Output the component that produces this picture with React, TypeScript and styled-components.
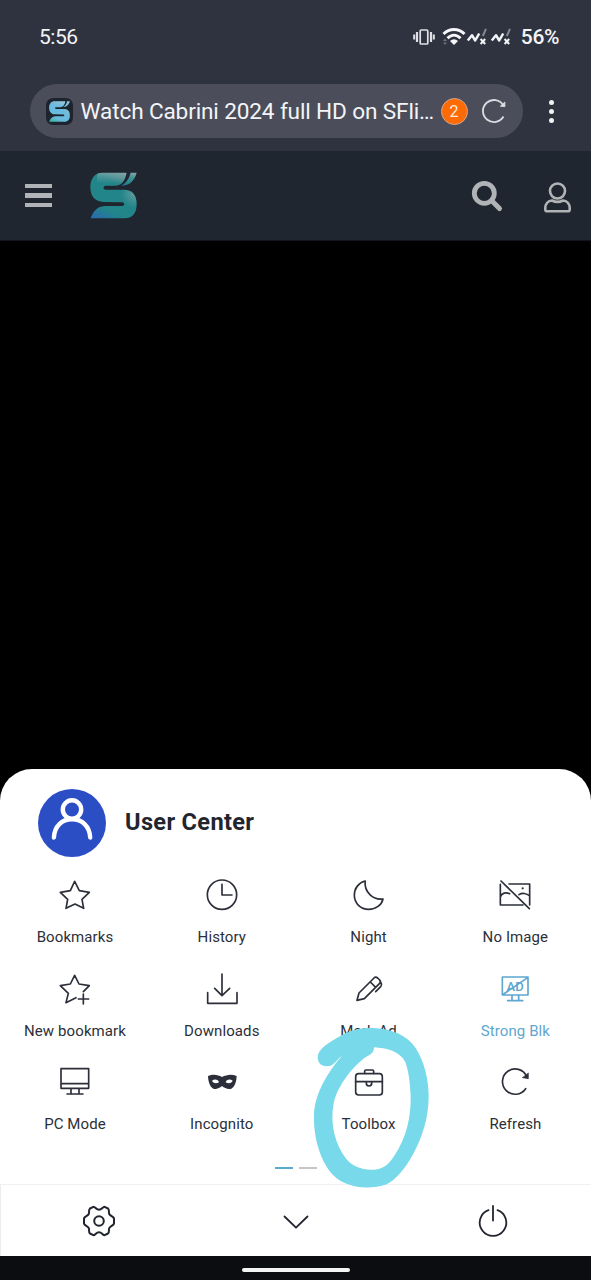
import React from "react";
import styled, { createGlobalStyle } from "styled-components";

const GlobalStyle = createGlobalStyle`
  *, *::before, *::after { box-sizing: border-box; }
  html, body { margin: 0; padding: 0; background: #000; }
  body { font-family: Roboto, "Liberation Sans", sans-serif; overflow: hidden; }
  svg { display: block; flex: none; }
`;

const Screen = styled.div`
  position: relative;
  display: flex;
  flex-direction: column;
  width: 591px;
  height: 1280px;
  background: #000;
  overflow: hidden;
`;

const BrowserTop = styled.div`
  height: 151px;
  background: #2f333f;
`;

const StatusBar = styled.div`
  display: flex;
  align-items: center;
  justify-content: space-between;
  height: 84px;
  padding: 0 32px 10px 39px;
  color: #f3f4f8;
  font-size: 21px;
  line-height: 24px;
`;

const Clock = styled.span`
  letter-spacing: -0.45px;
`;

const StatusIcons = styled.div`
  display: flex;
  align-items: center;
`;

const WifiIcon = styled.svg`
  margin-left: 7px;
`;

const Battery = styled.span`
  margin-left: 7px;
  font-weight: 500;
  letter-spacing: -0.4px;
`;

const AddressRow = styled.div`
  display: flex;
  align-items: center;
  padding-left: 30px;
`;

const AddressPill = styled.div`
  display: flex;
  align-items: center;
  width: 493px;
  height: 54px;
  padding: 0 15px 0 16px;
  border-radius: 27px;
  background: #4b4e5a;
`;

const Favicon = styled.div`
  display: flex;
  align-items: center;
  justify-content: center;
  width: 27px;
  height: 27px;
  border-radius: 7px;
  background: #1e242e;
`;

const PageTitle = styled.span`
  width: 360px;
  margin: 1px 0 0 7.5px;
  color: #f3f4f8;
  font-size: 22.6px;
  line-height: 30px;
  letter-spacing: -0.14px;
  white-space: nowrap;
`;

const Counter = styled.span`
  display: flex;
  align-items: center;
  justify-content: center;
  width: 27px;
  height: 27px;
  border: 1px solid #d3a88d;
  border-radius: 50%;
  background: #fe6a04;
  color: #fbeade;
  font-size: 16px;
`;

const ReloadIcon = styled.svg`
  margin-left: 12.5px;
`;

const MoreButton = styled.div`
  display: flex;
  flex-direction: column;
  gap: 4px;
  margin-left: 26px;
`;

const Dot = styled.i`
  width: 5px;
  height: 5px;
  border-radius: 50%;
  background: #f0f1f5;
`;

const SiteHeader = styled.header`
  display: flex;
  align-items: center;
  height: 90px;
  padding: 0 18px 0 25px;
  border-bottom: 1px solid #11151b;
  background: #20262f;
`;

const MenuButton = styled.div`
  display: flex;
  flex-direction: column;
  gap: 5px;
  width: 27px;
  margin-right: 38px;
`;

const MenuBar = styled.i`
  height: 4.6px;
  background: #b1b4b6;
`;

const HeaderActions = styled.div`
  display: flex;
  align-items: center;
  gap: 39.5px;
  margin-left: auto;
`;

const Video = styled.main`
  height: 528px;
  background: #000;
`;

const Sheet = styled.section`
  display: flex;
  flex-direction: column;
  height: 487px;
  border-radius: 32px 32px 0 0;
  background: #fff;
  color: #292c35;
`;

const Profile = styled.div`
  display: flex;
  align-items: center;
  height: 108px;
  padding-left: 37.5px;
`;

const ProfileName = styled.h1`
  margin: 0 0 3px 19.5px;
  font-size: 23.6px;
  font-weight: 700;
  line-height: 30px;
  letter-spacing: 0.33px;
  color: #22252e;
`;

const Tiles = styled.div`
  display: grid;
  grid-template-columns: repeat(4, 146.8px);
  grid-auto-rows: 93.6px;
  padding-left: 1.6px;
`;

const Tile = styled.div<{ $active?: boolean }>`
  display: flex;
  flex-direction: column;
  align-items: center;
  color: ${(p) => (p.$active ? "#5fa6d0" : "#2c2f39")};
`;

const TileLabel = styled.span`
  margin-top: 14px;
  font-size: 15px;
  line-height: 20px;
  letter-spacing: 0.1px;
  white-space: nowrap;
`;

const Pager = styled.div`
  display: flex;
  justify-content: center;
  gap: 6px;
  margin-top: 9px;
`;

const PagerDash = styled.i<{ $on?: boolean }>`
  width: 18px;
  height: 2px;
  background: ${(p) => (p.$on ? "#58a9ce" : "#c6c6c8")};
`;

const Toolbar = styled.div`
  display: grid;
  grid-template-columns: repeat(3, 1fr);
  align-items: center;
  justify-items: center;
  height: 72px;
  margin-top: auto;
  border-top: 1px solid #f1f1f1;
  border-left: 1px solid #ededf0;
  color: #22252e;
`;

const SystemNav = styled.div`
  display: flex;
  justify-content: center;
  height: 24px;
  padding-top: 12px;
  background: #0b0d11;
`;

const HomeHandle = styled.i`
  width: 108px;
  height: 4px;
  border-radius: 2px;
  background: #f4f4f4;
`;

const Highlight = styled.svg`
  position: absolute;
  left: 300px;
  top: 1020px;
  pointer-events: none;
`;

function SLogo({ id, size, colors }: { id: string; size: number; colors: [string, string, string] }) {
  const body =
    "M378 83H306C283 83 270 101 270 126C270 154 285 170 309 170L366 171Q371 172 371 177T366 182H315C286 183 276 204 271 219H371C396 219 408 203 408 177C408 149 395 134 370 134H315Q309 133 309 128T315 122H346C366 120 374 103 378 83Z";
  const accent = "M408 83H390C386 100 378 112 362 122C388 121 401 107 408 83Z";
  return (
    <svg width={size} height={size} viewBox="269 82 140 138">
      <defs>
        <linearGradient id={id + "g"} x1="0.7" y1="0" x2="0.2" y2="1">
          <stop offset="0" stopColor={colors[0]} />
          <stop offset="0.25" stopColor={colors[1]} />
          <stop offset="0.78" stopColor={colors[1]} />
          <stop offset="1" stopColor={colors[2]} />
        </linearGradient>
        <pattern id={id + "p"} width="6" height="6" patternUnits="userSpaceOnUse">
          <rect width="3" height="3" fill="#a7b7b9" />
          <rect x="3" y="3" width="3" height="3" fill="#a7b7b9" />
        </pattern>
        <radialGradient id={id + "r"} gradientUnits="userSpaceOnUse" cx="403" cy="145" r="42">
          <stop offset="0" stopColor="#fff" />
          <stop offset="1" stopColor="#000" />
        </radialGradient>
        <linearGradient id={id + "t"} gradientUnits="userSpaceOnUse" x1="0" y1="82" x2="0" y2="116">
          <stop offset="0" stopColor="#fff" />
          <stop offset="1" stopColor="#000" />
        </linearGradient>
        <mask id={id + "m"} maskUnits="userSpaceOnUse" x="269" y="82" width="140" height="138">
          <rect x="290" y="82" width="120" height="34" fill={`url(#${id}t)`} />
          <rect x="360" y="125" width="50" height="60" fill={`url(#${id}r)`} />
        </mask>
      </defs>
      <path d={body} fill={`url(#${id}g)`} />
      <path d={accent} fill={`url(#${id}g)`} />
      <path d={body + accent} fill={`url(#${id}p)`} mask={`url(#${id}m)`} />
    </svg>
  );
}

const Signal = () => (
  <svg width="24" height="20" viewBox="0 0 24 20" fill="none" strokeLinejoin="round">
    <path d="M1.8 13.5L6 8.2L9.2 13.5L13.2 6.5" stroke="#f3f4f8" strokeWidth="2.5" />
    <path d="M16.8 9L20 1.8" stroke="#858892" strokeWidth="2" />
    <path d="M14.6 12L19.2 17M19.2 12L14.6 17" stroke="#f3f4f8" strokeWidth="2" />
  </svg>
);

function StatusGlyphs() {
  return (
    <>
      <svg width="22" height="18" viewBox="0 0 22 18" fill="none" stroke="#e0e1e6">
        <rect x="7.2" y="2" width="7.6" height="14" rx="1" strokeWidth="1.7" />
        <path d="M4 4V14M18 4V14" strokeWidth="2.2" />
        <path d="M1.2 6.5V11.5M20.8 6.5V11.5" strokeWidth="2" />
      </svg>
      <WifiIcon width="24" height="20" viewBox="0 0 24 20" fill="none">
        <path d="M1.5 7C7.5 1 16.5 1 22.5 7" stroke="#f7f7fa" strokeWidth="3" />
        <path d="M5.5 11.2C9.5 7 14.5 7 18.5 11.2" stroke="#f7f7fa" strokeWidth="2.8" />
        <path d="M8 14Q12 10.5 16 14L12 18Z" fill="#f7f7fa" />
        <path d="M1 14L3 11.5L5 14ZM1 15.5L3 18L5 15.5Z" fill="#6f727c" />
      </WifiIcon>
      <Signal />
      <Signal />
    </>
  );
}

const ICONS: Record<string, React.ReactNode> = {
  star: <path d="M53 13L67 41L97 46L75 67L80 94L54 81L27 94L32 67L10 46L40 41Z" />,
  clock: (
    <>
      <circle cx="54" cy="53" r="44" />
      <path d="M54 22V54H84" />
    </>
  ),
  moon: <path d="M42.5 12C23 17 10 34 10 54C10 79 29 97 53 97C75 97 92 84 96 66C66 70 39 45 42.5 12Z" />,
  noImage: (
    <>
      <path d="M12 12L97 95M36 21H98V84M78 84H10V22M10 60C14 47 27 45 38 50M66 53C75 47 89 48 98 57" />
      <circle cx="77" cy="34" r="3.4" fill="currentColor" stroke="none" />
    </>
  ),
  starPlus: <path d="M79 62L97 44L66 39L53 13L40 39L10 44L34 67L27 95L57 80M79 69V99M64 84H95" />,
  download: <path d="M54 9V73M32 52L54 74L77 52M11 65V97H99V65" />,
  pencil: (
    <path d="M18 88L24 66L69 21Q74 16 80 21L86 27Q91 32 86 37L40 83L18 88ZM58 33L74 49M86 28L91 38Q93 43 89 47L74 62" />
  ),
  adBlock: (
    <>
      <path d="M16 18H93V72H16ZM20 69L92 20M45 73V88M65 73V88M32 89H77" />
      <text
        x="54.5"
        y="59"
        textAnchor="middle"
        fontFamily="Roboto, sans-serif"
        fontSize="39"
        fontWeight="500"
        fill="currentColor"
        stroke="none"
      >
        AD
      </text>
    </>
  ),
  monitor: <path d="M12 14H95V73H12ZM12 59H95M42 74V89M66 74V89M30 90H78" />,
  mask: (
    <path
      fill="currentColor"
      stroke="none"
      fillRule="evenodd"
      d="M12 36C28 29 42 32 54 39C67 32 82 29 98 36C97 54 93 68 82 74C71 77 62 72 54 66C46 72 37 77 28 74C17 68 13 54 12 36ZM24 50C27 57 35 60 45 55C43 47 33 44 24 50ZM86 50C77 44 67 47 65 55C75 60 83 57 86 50Z"
    />
  ),
  toolbox: (
    <>
      <rect x="14" y="29" width="80" height="64" rx="9" />
      <path d="M41 28V22Q41 18 45 18H64Q68 18 68 22V28M14 53H94M46 53V58Q46 66 54 66T62 58V53" />
    </>
  ),
  refresh: (
    <>
      <path d="M86 74A38 38 0 1 1 89 37" />
      <path d="M94 28V44L77 41Z" fill="currentColor" strokeWidth="2" />
    </>
  ),
};

const tiles: { icon: string; label: string; active?: boolean }[] = [
  { icon: "star", label: "Bookmarks" },
  { icon: "clock", label: "History" },
  { icon: "moon", label: "Night" },
  { icon: "noImage", label: "No Image" },
  { icon: "starPlus", label: "New bookmark" },
  { icon: "download", label: "Downloads" },
  { icon: "pencil", label: "Mark Ad" },
  { icon: "adBlock", label: "Strong Blk", active: true },
  { icon: "monitor", label: "PC Mode" },
  { icon: "mask", label: "Incognito" },
  { icon: "toolbox", label: "Toolbox" },
  { icon: "refresh", label: "Refresh" },
];

export default function App() {
  return (
    <Screen>
      <GlobalStyle />
      <BrowserTop>
        <StatusBar>
          <Clock>5:56</Clock>
          <StatusIcons>
            <StatusGlyphs />
            <Battery>56%</Battery>
          </StatusIcons>
        </StatusBar>
        <AddressRow>
          <AddressPill>
            <Favicon>
              <SLogo id="fav" size={21} colors={["#8fd0ec", "#6abbe0", "#45b3a6"]} />
            </Favicon>
            <PageTitle>Watch Cabrini 2024 full HD on SFli…</PageTitle>
            <Counter>2</Counter>
            <ReloadIcon width="28" height="28" viewBox="0 0 28 28" fill="none" stroke="#dcdde2" strokeWidth="1.8">
              <path d="M23.5 19.5A11 11 0 1 1 23.3 8.2" />
              <path d="M24.9 5V9.7L20.3 9.2Z" fill="#dcdde2" strokeWidth="0.8" />
            </ReloadIcon>
          </AddressPill>
          <MoreButton>
            <Dot />
            <Dot />
            <Dot />
          </MoreButton>
        </AddressRow>
      </BrowserTop>
      <SiteHeader>
        <MenuButton>
          <MenuBar />
          <MenuBar />
          <MenuBar />
        </MenuButton>
        <SLogo id="site" size={47} colors={["#5f9195", "#22858a", "#286ea8"]} />
        <HeaderActions>
          <svg width="34" height="34" viewBox="0 0 34 34" fill="none" stroke="#b1b4b6">
            <circle cx="14.3" cy="14.3" r="10" strokeWidth="4.8" />
            <path d="M21.5 21.5L29.5 29.5" strokeWidth="5" strokeLinecap="round" />
          </svg>
          <svg width="30" height="34" viewBox="0 0 30 34" fill="none" stroke="#b1b4b6" strokeWidth="2.6">
            <circle cx="14.5" cy="12" r="7.5" />
            <path d="M9 21.5C5 21.5 2.3 25 2.3 29V30.5Q2.3 32.3 4 32.3H25Q26.7 32.3 26.7 30.5V29C26.7 25 24 21.5 20 21.5Q14.5 24.3 9 21.5Z" />
          </svg>
        </HeaderActions>
      </SiteHeader>
      <Video />
      <Sheet>
        <Profile>
          <svg width="68" height="68" viewBox="0 0 68 68" fill="none" stroke="#fff" strokeWidth="4.4">
            <circle cx="34" cy="34" r="34" fill="#2b4ec5" stroke="none" />
            <circle cx="34" cy="20.5" r="9.2" />
            <path d="M15.9 48.5C16.5 37 24 30.3 34 30.3S51.6 37 52.2 48.5" strokeLinecap="round" />
          </svg>
          <ProfileName>User Center</ProfileName>
        </Profile>
        <Tiles>
          {tiles.map((t) => (
            <Tile key={t.label} $active={t.active}>
              <svg
                width="36"
                height="36"
                viewBox="0 0 108 108"
                fill="none"
                stroke="currentColor"
                strokeWidth="5"
                strokeLinejoin="round"
                strokeLinecap="round"
              >
                {ICONS[t.icon]}
              </svg>
              <TileLabel>{t.label}</TileLabel>
            </Tile>
          ))}
        </Tiles>
        <Pager>
          <PagerDash $on />
          <PagerDash />
        </Pager>
        <Toolbar>
          <svg width="36" height="36" viewBox="0 0 36 36" fill="none" stroke="currentColor" strokeWidth="2" strokeLinejoin="round">
            <path d="M12.4 3.8C14.4 3.8 15 6.8 18 6.8S21.6 3.8 23.6 3.8L27 5.5C28.7 6.8 27.4 8.5 28.2 10.8C29 13 32.2 13.2 33 15.3V20.6C32.2 22.8 29 22.8 28.2 25.2C27.4 27.5 28.7 29 27 30.5L23.6 32.2C21.6 32.2 21 29.3 18 29.3S14.4 32.2 12.4 32.2L9 30.5C7.3 29 8.6 27.5 7.8 25.2C7 22.8 3.8 22.8 3 20.6V15.3C3.8 13.2 7 13 7.8 10.8C8.6 8.5 7.3 6.8 9 5.5Z" />
            <circle cx="18" cy="18" r="4.8" />
          </svg>
          <svg width="36" height="36" viewBox="0 0 36 36" fill="none" stroke="currentColor" strokeWidth="1.8" strokeLinecap="round" strokeLinejoin="round">
            <path d="M6.5 13.5L18 24.7L29.5 13.5" />
          </svg>
          <svg width="36" height="36" viewBox="0 0 36 36" fill="none" stroke="currentColor" strokeWidth="1.8" strokeLinecap="round">
            <path d="M13.5 7.1A13.3 13.3 0 1 0 22.5 7.1M18 3V17.5" />
          </svg>
        </Toolbar>
      </Sheet>
      <SystemNav>
        <HomeHandle />
      </SystemNav>
      <Highlight width="140" height="180" viewBox="0 0 420 540">
        <path
          fill="#77d9e9"
          fillRule="evenodd"
          d="M53 112C53 86 88 67 122 47C151 30 183 22 218 24C272 26 322 45 347 84C374 127 386 181 386 228C386 294 367 352 338 405C315 446 288 479 260 493C220 507 171 506 136 490C96 474 73 436 59 396C46 359 41 321 42 286C43 223 82 158 126 107C112 116 103 137 82 139C64 139 53 129 53 112ZM222 82C222 101 207 105 192 115C151 148 111 202 101 250C89 312 105 373 139 417C157 439 183 448 212 449C247 451 266 434 283 407C318 356 333 294 332 230C330 188 327 159 316 126C300 94 258 84 222 82Z"
        />
      </Highlight>
    </Screen>
  );
}
